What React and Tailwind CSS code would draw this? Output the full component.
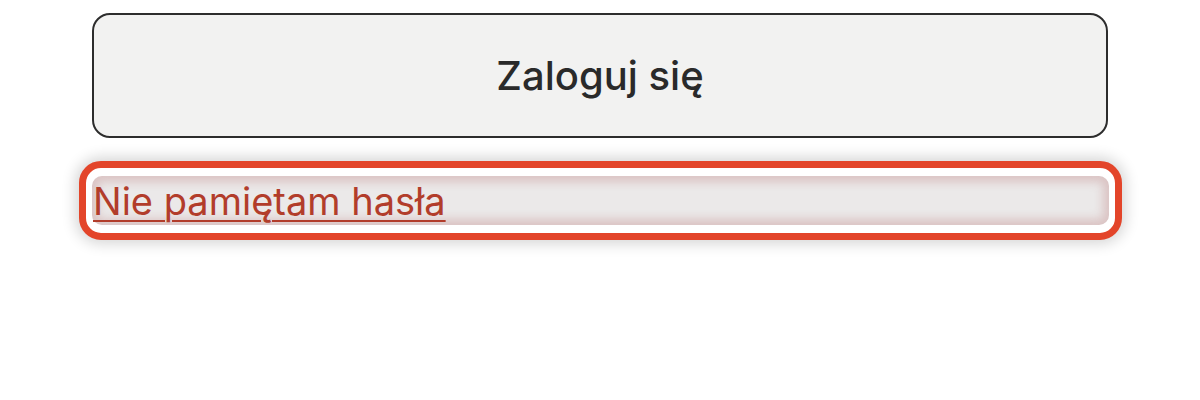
export default function App() {
  return (
    <div className="w-[1200px] h-[400px] bg-white px-[92px] pt-[13px]" style={{ fontFamily: "Inter, 'Liberation Sans', sans-serif" }}>
      <button className="w-full h-[125px] border-2 border-[#2d2d2d] rounded-[18px] bg-[#f2f2f1] text-[40px] text-[#2a2a2a] font-medium flex items-center justify-center">
        Zaloguj się
      </button>
      <div className="mt-[23px] -ml-[13px] -mr-[14px] rounded-[22px] border-[7px] border-[#e3452a] bg-white px-[6px] py-[8px] shadow-[0_0_14px_4px_rgba(0,0,0,0.16)]">
        <div className="h-[49px] rounded-[10px] bg-[#ebe9e9] shadow-[inset_0_0_10px_6px_rgba(200,150,150,0.45)] flex items-center">
          <a href="#" className="text-[38px] leading-none text-[#b23d2b] underline underline-offset-[5px] decoration-[2px] ml-[1px]">
            Nie pamiętam hasła
          </a>
        </div>
      </div>
    </div>
  );
}
